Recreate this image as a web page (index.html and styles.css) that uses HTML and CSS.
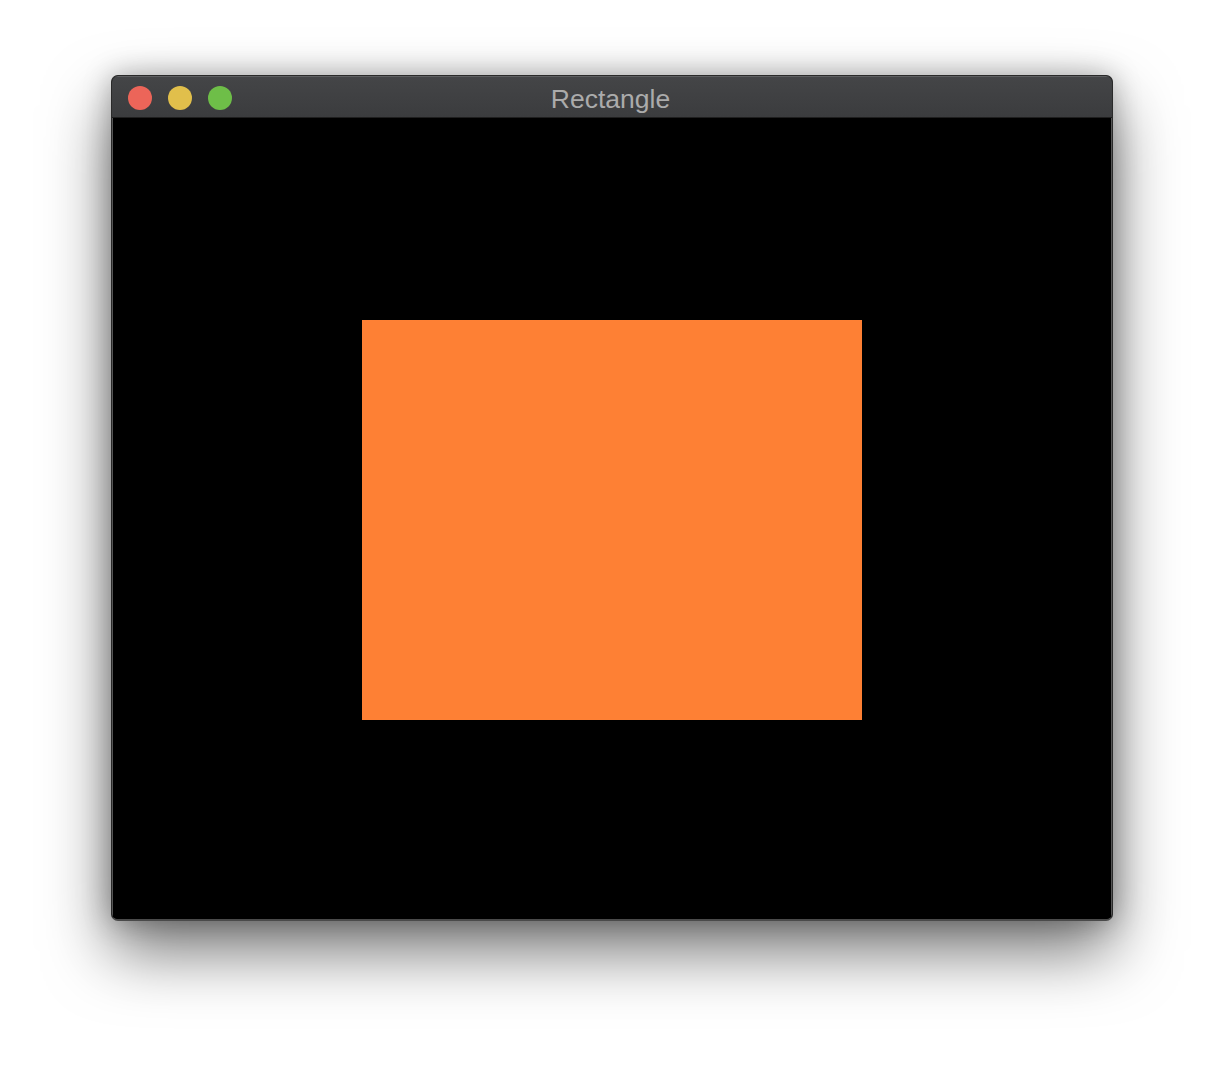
FILE: index.html
```html
<!DOCTYPE html>
<html>
<head>
<meta charset="utf-8">
<link rel="stylesheet" href="styles.css">
</head>
<body>
<div class="stage">
  <div class="window">
    <div class="titlebar">
      <div class="lights">
        <span class="light red"></span>
        <span class="light yellow"></span>
        <span class="light green"></span>
      </div>
      <div class="title">Rectangle</div>
    </div>
    <div class="content">
      <div class="rect"></div>
    </div>
  </div>
</div>
</body>
</html>
```

FILE: styles.css
```css
html, body {
  margin: 0;
  padding: 0;
  background: #ffffff;
}
.stage {
  padding: 75px 0 0 111px;
  width: 1224px;
  height: 1068px;
  box-sizing: border-box;
  overflow: hidden;
}
.window {
  width: 1002px;
  box-sizing: border-box;
  border: 1px solid #2a2a2a;
  border-bottom: 2px solid #4a4a4a;
  border-radius: 7px;
  overflow: hidden;
  background: #000;
  box-shadow: 0 30px 65px rgba(0,0,0,0.55), 0 0 28px rgba(0,0,0,0.28);
}
.titlebar {
  position: relative;
  height: 42px;
  background: linear-gradient(#444547, #3b3c3e);
  border-top: 1px solid #5e5f61;
  box-sizing: border-box;
  display: flex;
  align-items: center;
  justify-content: center;
  border-bottom: 1px solid #1f1f1f;
}
.lights {
  position: absolute;
  left: 16px;
  top: 9px;
  display: flex;
  gap: 16px;
}
.light {
  width: 24px;
  height: 24px;
  border-radius: 50%;
  display: block;
}
.red { background: #ec6559; }
.yellow { background: #e1bf4b; }
.green { background: #6ebe48; }
.title {
  font-family: "Liberation Sans", Arial, sans-serif;
  font-size: 26.5px;
  color: #ababab;
  margin-left: -3px;
  margin-top: 4px;
}
.content {
  height: 801px;
  background: #000;
  border-left: 1px solid #555;
  border-right: 1px solid #555;
  padding: 202px 249px 0 249px;
  box-sizing: border-box;
}
.rect {
  width: 500px;
  height: 400px;
  background: #fe8034;
}
```
